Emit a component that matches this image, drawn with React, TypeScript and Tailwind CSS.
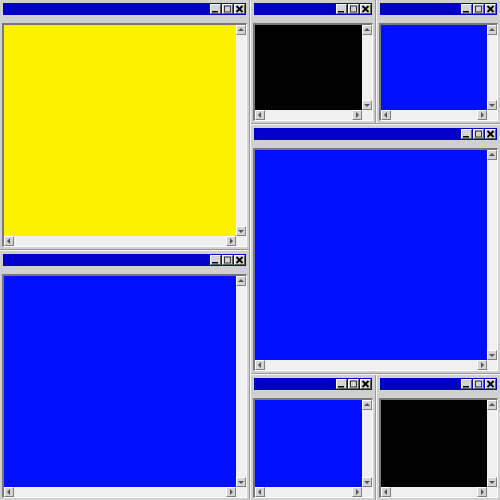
import React from 'react';

type Arrow = 'up' | 'down' | 'left' | 'right';

const ArrowBtn: React.FC<{ dir: Arrow }> = ({ dir }) => {
  const pts: Record<Arrow, string> = {
    up: '2,6 8,6 5,3',
    down: '2,4 8,4 5,7',
    left: '6,2 6,8 3,5',
    right: '4,2 4,8 7,5',
  };
  return (
    <div className="w-[10px] h-[10px] shrink-0 bg-[#d4d4d4] border border-t-white border-l-white border-r-[#808080] border-b-[#808080] flex items-center justify-center">
      <svg width="8" height="8" viewBox="1 1 8 8">
        <polygon points={pts[dir]} fill="#555" />
      </svg>
    </div>
  );
};

const TitleBtn: React.FC<{ kind: 'min' | 'max' | 'close' }> = ({ kind }) => (
  <div className="w-[11px] h-[10px] bg-[#d4d4d4] border border-t-white border-l-white border-r-[#606060] border-b-[#606060] flex items-center justify-center">
    <svg width="9" height="8" viewBox="0 0 9 8">
      {kind === 'min' && <rect x="1" y="6" width="6" height="1.5" fill="#000" />}
      {kind === 'max' && <rect x="1.5" y="1" width="6" height="6" fill="none" stroke="#333" strokeWidth="1" />}
      {kind === 'close' && (
        <path d="M1.5 1 L7.5 7 M7.5 1 L1.5 7" stroke="#000" strokeWidth="1.8" />
      )}
    </svg>
  </div>
);

const Win: React.FC<{ fill: string; className?: string }> = ({ fill, className = '' }) => (
  <div className={`flex flex-col px-[2px] pt-[3px] pb-[2px] bg-[#d0d0d0] min-w-0 min-h-0 ${className}`}>
    {/* title bar */}
    <div className="h-[12px] mx-[1px] shrink-0 bg-[#0000c8] flex items-center justify-end gap-[1px] pr-[1px]">
      <TitleBtn kind="min" />
      <TitleBtn kind="max" />
      <TitleBtn kind="close" />
    </div>
    <div className="h-[8px] shrink-0" />
    {/* client area */}
    <div className="flex-1 min-h-0 border-t-2 border-l-2 border-r border-b border-t-[#787878] border-l-[#787878] border-r-white border-b-white grid grid-cols-[1fr_10px] grid-rows-[1fr_10px]">
      <div className={fill} />
      <div className="bg-[#f0f0f0] flex flex-col justify-between">
        <ArrowBtn dir="up" />
        <ArrowBtn dir="down" />
      </div>
      <div className="bg-[#f0f0f0] flex justify-between">
        <ArrowBtn dir="left" />
        <ArrowBtn dir="right" />
      </div>
      <div className="bg-[#f0f0f0]" />
    </div>
  </div>
);

const VDiv = () => (
  <div className="w-[2px] shrink-0 flex">
    <div className="w-px bg-[#9a9a9a]" />
    <div className="w-px bg-[#f4f4f4]" />
  </div>
);

const HDiv = () => (
  <div className="h-[2px] shrink-0 flex flex-col">
    <div className="h-px bg-[#9a9a9a]" />
    <div className="h-px bg-[#f4f4f4]" />
  </div>
);

export default function App() {
  return (
    <div className="w-[500px] h-[500px] flex bg-[#d0d0d0] overflow-hidden">
      <div className="w-[249px] shrink-0 flex flex-col">
        <Win fill="bg-[#fff200]" className="h-[249px] shrink-0" />
        <HDiv />
        <Win fill="bg-[#0010ff]" className="flex-1" />
      </div>
      <VDiv />
      <div className="flex-1 min-w-0 flex flex-col">
        <div className="h-[123px] shrink-0 flex">
          <Win fill="bg-black" className="flex-1" />
          <VDiv />
          <Win fill="bg-[#0010ff]" className="flex-1" />
        </div>
        <HDiv />
        <Win fill="bg-[#0010ff]" className="h-[248px] shrink-0" />
        <HDiv />
        <div className="flex-1 min-h-0 flex">
          <Win fill="bg-[#0010ff]" className="flex-1" />
          <VDiv />
          <Win fill="bg-black" className="flex-1" />
        </div>
      </div>
    </div>
  );
}
